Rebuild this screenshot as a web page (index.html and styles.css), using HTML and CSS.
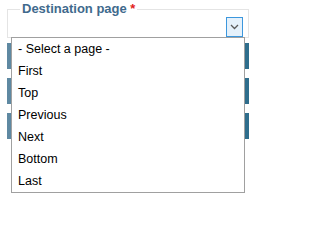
FILE: index.html
```html
<!DOCTYPE html>
<html>
<head>
<meta charset="utf-8">
<link rel="stylesheet" href="styles.css">
</head>
<body>
<div class="panel">
  <fieldset class="field">
    <legend class="label">Destination page <span class="req">*</span></legend>
    <div class="select-row">
      <span class="arrow">
        <svg width="9" height="6" viewBox="0 0 9 6"><polyline points="1,1 4.5,4.5 8,1" fill="none" stroke="#5a5a5a" stroke-width="1.3"/></svg>
      </span>
    </div>
  </fieldset>
  <div class="buttons">
    <div class="bar"></div>
    <div class="bar"></div>
    <div class="bar"></div>
  </div>
  <ul class="list">
    <li class="item">- Select a page -</li>
    <li class="item">First</li>
    <li class="item">Top</li>
    <li class="item">Previous</li>
    <li class="item">Next</li>
    <li class="item">Bottom</li>
    <li class="item">Last</li>
  </ul>
</div>
</body>
</html>
```
FILE: styles.css
```css
html, body {
  margin: 0;
  background: #fff;
}
body {
  width: 255px;
  height: 207px;
  overflow: hidden;
}
.panel {
  position: relative;
  box-sizing: border-box;
  width: 255px;
  height: 207px;
  padding: 1px 6px 0 7px;
  font-family: "Liberation Sans", Arial, sans-serif;
}
.field {
  margin: 0;
  border: 1px solid #e4e4e4;
  padding: 0 5px 0 0;
  min-width: 0;
}
.label {
  margin-left: 12px;
  padding: 0 2px;
  font-weight: bold;
  font-size: 13px;
  line-height: 16px;
  color: #3f6a8d;
}
.req {
  color: #e2231a;
}
.select-row {
  height: 20px;
  display: flex;
  justify-content: flex-end;
}
.arrow {
  width: 17px;
  height: 20px;
  box-sizing: border-box;
  border: 1px solid #3c97dd;
  background: #e5f1fb;
  display: flex;
  align-items: center;
  justify-content: center;
}
.buttons {
  display: flex;
  flex-direction: column;
  gap: 9px;
  margin-top: 5px;
}
.bar {
  height: 26px;
  background: linear-gradient(90deg, #5f89a2, #2e6d8c);
}
.list {
  position: absolute;
  left: 11px;
  top: 37px;
  width: 234px;
  box-sizing: border-box;
  margin: 0;
  padding: 0;
  list-style: none;
  border: 1px solid #a0a0a0;
  background: #fff;
}
.item {
  height: 22px;
  line-height: 22px;
  padding-left: 6px;
  font-size: 12.5px;
  color: #000;
}
```
